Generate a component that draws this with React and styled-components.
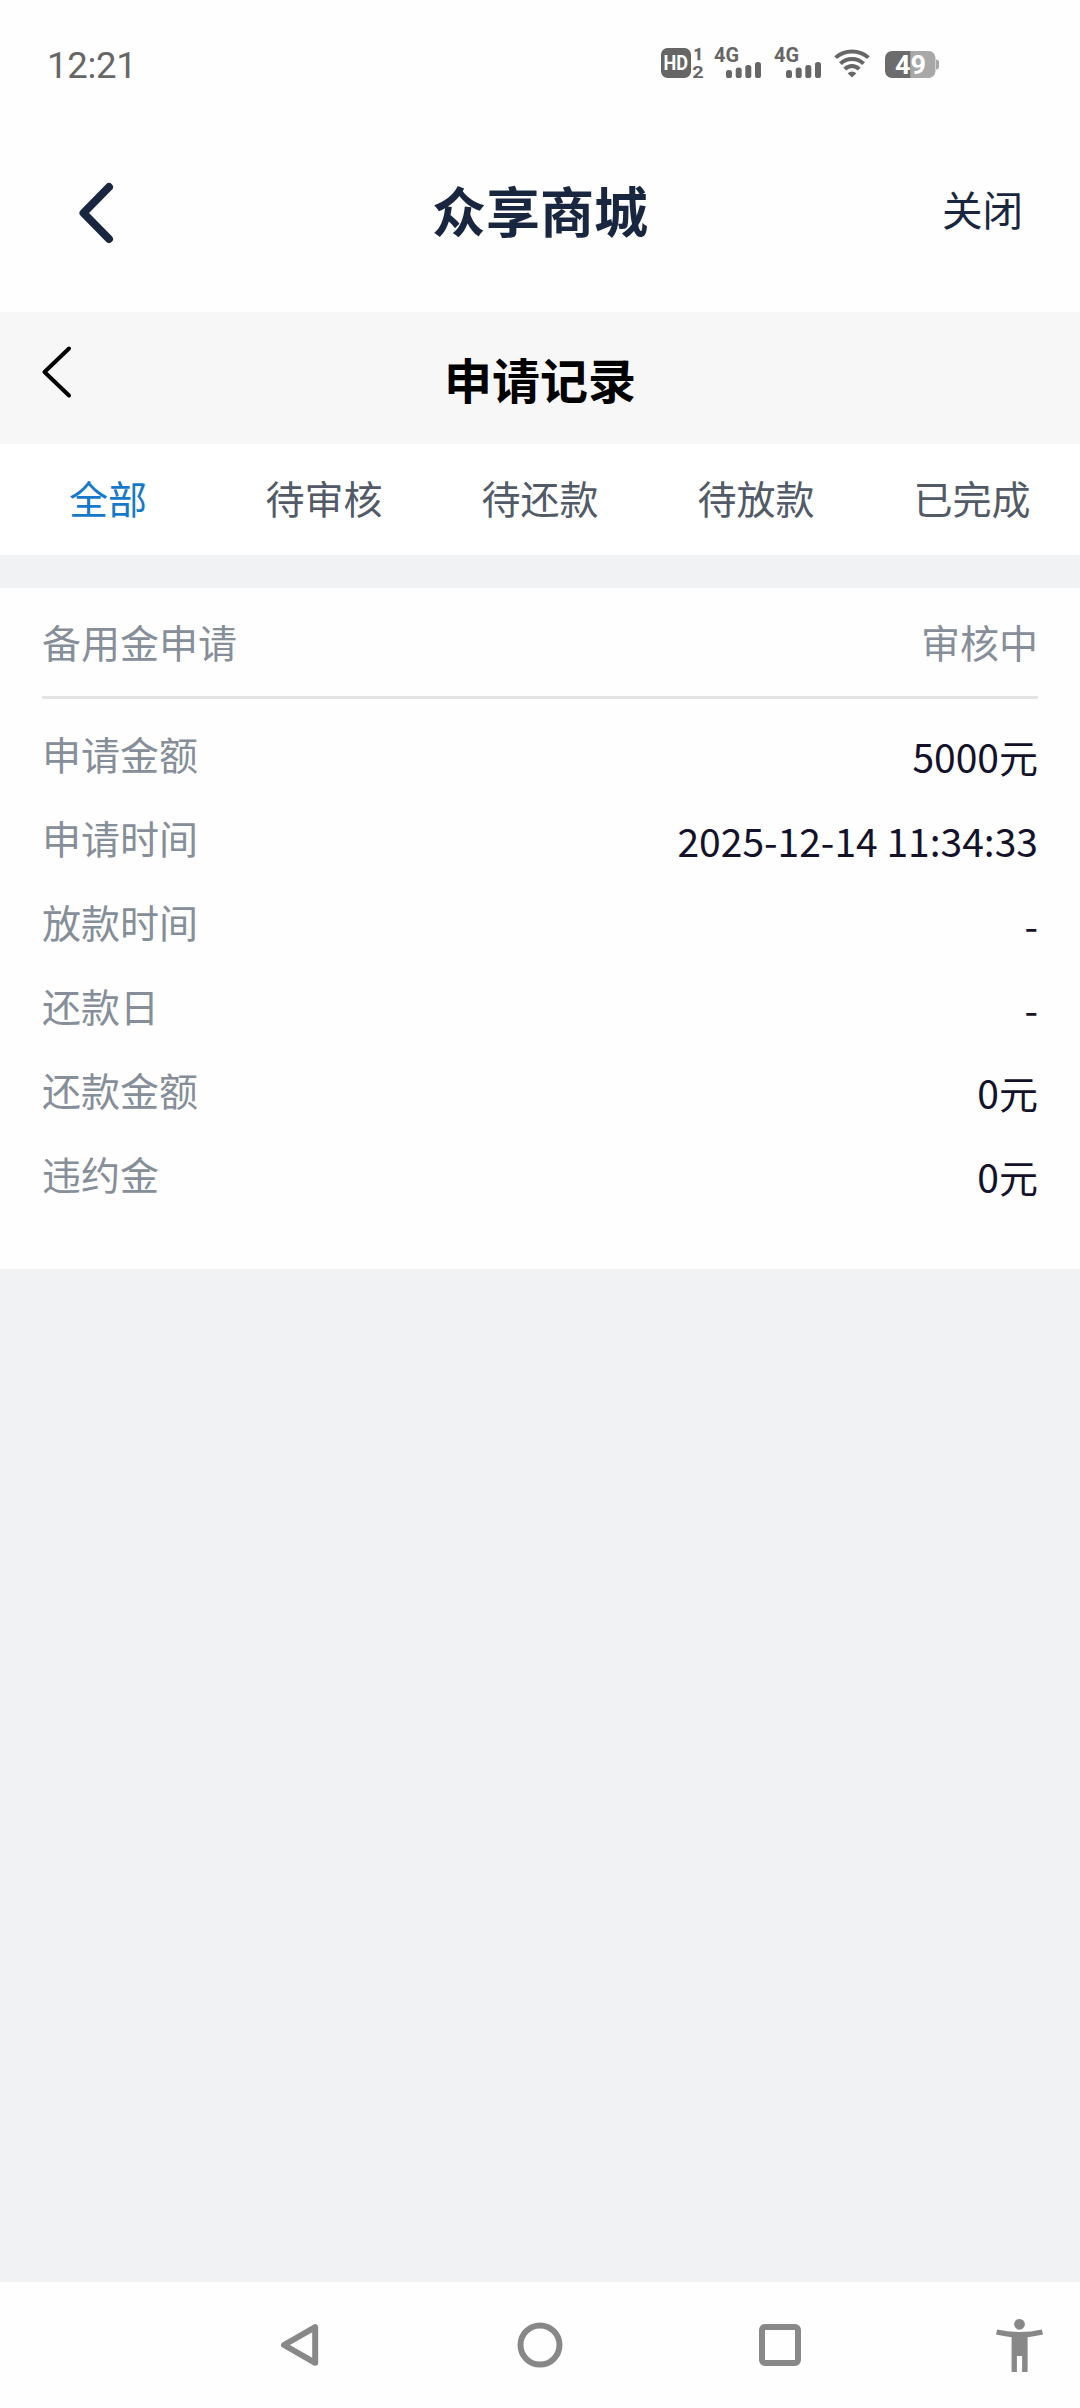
import React from 'react';
import styled, { createGlobalStyle } from 'styled-components';

const GlobalStyle = createGlobalStyle`
  * { box-sizing: border-box; }
  body {
    margin: 0;
    background: #f0f2f4;
    font-family: "Noto Sans CJK SC", "Noto Sans", sans-serif;
  }
`;

const Screen = styled.div`
  width: 1080px;
  height: 2408px;
  display: flex;
  flex-direction: column;
  background: #f0f2f4;
  overflow: hidden;
`;

const StatusBar = styled.div`
  height: 108px;
  flex: none;
  display: flex;
  align-items: flex-start;
  justify-content: space-between;
  padding: 48px 141px 0 47px;
  background: #fefefe;
`;

const Clock = styled.span`
  font-family: Roboto, sans-serif;
  font-size: 36.5px;
  line-height: 36px;
  letter-spacing: -0.3px;
  color: #666;
`;

const StatusIcons = styled.div`
  display: flex;
  height: 30px;
`;

const StatusSvg = styled.svg`
  display: block;
  height: 30px;
  margin-left: ${(p) => p.$gap || 0}px;
  overflow: visible;
  font-family: Roboto, sans-serif;
  font-weight: 700;
`;

const AppHeader = styled.header`
  height: 204px;
  flex: none;
  display: grid;
  grid-template-columns: 240px 1fr 240px;
  align-items: center;
  background: #fefefe;
  color: #18263f;
`;

const AppBack = styled.button`
  border: 0;
  padding: 6px 0 0 75px;
  background: none;
  color: inherit;
  display: flex;
`;

const AppTitle = styled.h1`
  margin: 0;
  padding-bottom: 1px;
  font-size: 54px;
  line-height: 80px;
  font-weight: 700;
  text-align: center;
`;

const CloseButton = styled.button`
  border: 0;
  padding: 0 57px 2px 0;
  background: none;
  font-family: inherit;
  font-size: 40.5px;
  line-height: 60px;
  color: #18263f;
  text-align: right;
`;

const PageHeader = styled.div`
  height: 132px;
  flex: none;
  display: grid;
  grid-template-columns: 240px 1fr 240px;
  align-items: center;
  background: #f7f7f7;
  color: #000;
`;

const PageBack = styled.button`
  border: 0;
  padding: 0 0 12px 39px;
  background: none;
  color: inherit;
  display: flex;
`;

const PageTitle = styled.h2`
  margin: 0;
  font-size: 48px;
  line-height: 70px;
  font-weight: 700;
  text-align: center;
`;

const Tabs = styled.nav`
  height: 111px;
  flex: none;
  display: grid;
  grid-template-columns: repeat(5, 1fr);
  align-items: center;
  padding-bottom: 5px;
  background: #fff;
`;

const Tab = styled.span`
  font-size: 39px;
  line-height: 56px;
  text-align: center;
  color: ${(p) => (p.$active ? '#1479cb' : '#515a66')};
`;

const Card = styled.section`
  flex: none;
  margin-top: 33px;
  padding: 0 42px 54px;
  background: #fefefe;
`;

const CardHead = styled.div`
  height: 111px;
  display: flex;
  align-items: center;
  justify-content: space-between;
  margin-bottom: 12px;
  padding-bottom: 2px;
  border-bottom: 3px solid #e4e4e4;
  font-size: 39px;
  color: #868e99;
`;

const Row = styled.div`
  height: 84px;
  display: flex;
  align-items: center;
  justify-content: space-between;
  font-size: 39px;
  line-height: 56px;
`;

const Label = styled.span`
  color: #868e99;
`;

const Value = styled.span`
  padding-top: 5px;
  color: #14112b;
`;

const NavBar = styled.div`
  height: 126px;
  flex: none;
  margin-top: auto;
  display: flex;
  align-items: center;
  gap: 192px;
  padding-left: 276px;
  background: #fefefe;
  color: #888;
`;

const NavSvg = styled.svg`
  display: block;
  flex: none;
  width: 48px;
  height: 60px;
`;

const tabs = ['全部', '待审核', '待还款', '待放款', '已完成'];

const rows = [
  ['申请金额', '5000元'],
  ['申请时间', '2025-12-14 11:34:33'],
  ['放款时间', '-'],
  ['还款日', '-'],
  ['还款金额', '0元'],
  ['违约金', '0元'],
];

function Signal({ gap }) {
  return (
    <StatusSvg $gap={gap} width="48" viewBox="0 0 48 30" fill="#666">
      <text x="0" y="14" fontSize="19.5" textLength="25" lengthAdjust="spacingAndGlyphs">4G</text>
      <rect x="12" y="22" width="6" height="8" rx="2.6" />
      <rect x="21.7" y="19.5" width="6" height="10.5" rx="2.6" />
      <rect x="31.3" y="17" width="6" height="13" rx="2.6" />
      <rect x="41" y="14" width="6" height="16" rx="2.6" />
    </StatusSvg>
  );
}

export default function App() {
  return (
    <Screen>
      <GlobalStyle />
      <StatusBar>
        <Clock>12:21</Clock>
        <StatusIcons>
          <StatusSvg width="44" viewBox="0 0 44 30" fill="#666">
            <rect width="30" height="30" rx="6.5" />
            <text x="2.5" y="22" fontSize="20" fill="#fff" textLength="24.5" lengthAdjust="spacingAndGlyphs">HD</text>
            <text x="32.5" y="12" fontSize="16.5" stroke="#666" strokeWidth="0.4">1</text>
            <text x="31.3" y="30" fontSize="17" textLength="11.5" lengthAdjust="spacingAndGlyphs">2</text>
          </StatusSvg>
          <Signal gap={9} />
          <Signal gap={12} />
          <StatusSvg $gap={12} width="36" viewBox="0 0 36 30" fill="none" stroke="#666" strokeWidth="4">
            <path d="M1.6 9.6C10.5 1.4 25.5 1.4 34.4 9.6" />
            <path d="M6.4 15.6C12.9 9.4 23.1 9.4 29.6 15.6" />
            <path d="M10.8 21.2C15 17 21 17 25.2 21.2" />
            <path d="M13.6 25.2Q18 21.8 22.4 25.2L18 29.6Z" fill="#666" stroke="none" />
          </StatusSvg>
          <StatusSvg $gap={15} width="54" viewBox="0 0 54 30">
            <path d="M25 3H43.5A7 7 0 0 1 50.5 10V23A7 7 0 0 1 43.5 30H25Z" fill="#a8a8a8" />
            <path d="M51 11.5Q54 12 54 14V19Q54 21 51 21.5Z" fill="#a8a8a8" />
            <path d="M25.3 3H7A7 7 0 0 0 0 10V23A7 7 0 0 0 7 30H25.3Z" fill="#6c6c6c" />
            <text x="10" y="25.5" fontSize="25" fill="#fff" textLength="31" lengthAdjust="spacingAndGlyphs">49</text>
          </StatusSvg>
        </StatusIcons>
      </StatusBar>

      <AppHeader>
        <AppBack aria-label="返回">
          <svg width="40" height="64" viewBox="0 0 40 64" fill="none" stroke="currentColor" strokeWidth="8" strokeLinecap="round" strokeLinejoin="round">
            <path d="M34 6L8.5 32L34 58" />
          </svg>
        </AppBack>
        <AppTitle>众享商城</AppTitle>
        <CloseButton>关闭</CloseButton>
      </AppHeader>

      <PageHeader>
        <PageBack aria-label="返回">
          <svg width="34" height="54" viewBox="0 0 34 54" fill="none" stroke="currentColor" strokeWidth="4" strokeLinecap="round" strokeLinejoin="round">
            <path d="M30 3.5L5.5 27L30 50.5" />
          </svg>
        </PageBack>
        <PageTitle>申请记录</PageTitle>
      </PageHeader>

      <Tabs>
        {tabs.map((name, i) => (
          <Tab key={name} $active={i === 0}>{name}</Tab>
        ))}
      </Tabs>

      <Card>
        <CardHead>
          <span>备用金申请</span>
          <span>审核中</span>
        </CardHead>
        {rows.map(([label, value]) => (
          <Row key={label}>
            <Label>{label}</Label>
            <Value>{value}</Value>
          </Row>
        ))}
      </Card>

      <NavBar>
        <NavSvg viewBox="0 0 48 60" fill="none" stroke="currentColor" strokeWidth="6" strokeLinejoin="round">
          <path d="M8 30L39.2 12.2V47.8Z" />
        </NavSvg>
        <NavSvg viewBox="0 0 48 60" fill="none" stroke="currentColor" strokeWidth="6">
          <circle cx="24" cy="30" r="19.5" />
        </NavSvg>
        <NavSvg viewBox="0 0 48 60" fill="currentColor" fillRule="evenodd">
          <path d="M9 9H39A6 6 0 0 1 45 15V45A6 6 0 0 1 39 51H9A6 6 0 0 1 3 45V15A6 6 0 0 1 9 9ZM9 15V45H39V15Z" />
        </NavSvg>
        <NavSvg viewBox="0 0 48 60" fill="currentColor">
          <circle cx="23.5" cy="9.3" r="5.4" />
          <path d="M1.2 14.6Q23.5 19.6 45.8 14.6L47 19.6Q39.5 21.4 31.6 22.2V57H26.1V41H20.9V57H15.6V22.2Q7.5 21.4 0 19.6Z" />
        </NavSvg>
      </NavBar>
    </Screen>
  );
}
